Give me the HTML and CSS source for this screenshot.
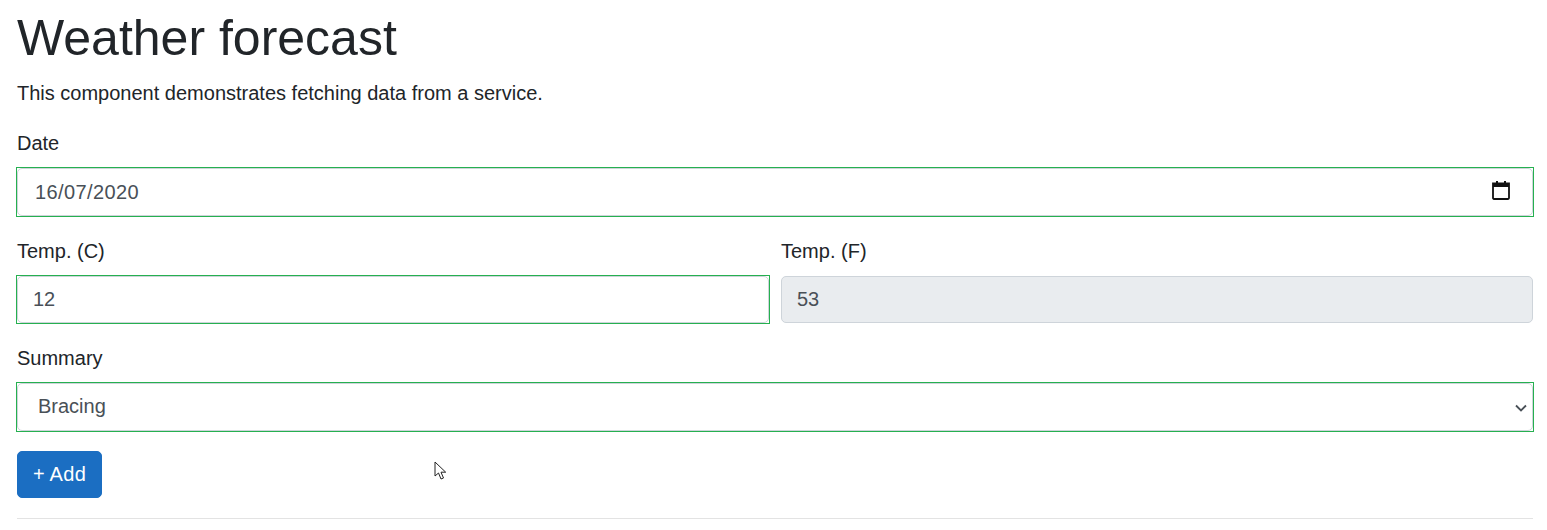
FILE: index.html
```html
<!DOCTYPE html>
<html lang="en">
<head>
<meta charset="utf-8">
<title>Weather forecast</title>
<link rel="stylesheet" href="styles.css">
</head>
<body>
<main class="page">
  <h1 class="title">Weather forecast</h1>
  <p class="lead">This component demonstrates fetching data from a service.</p>
  <form class="form">
    <div class="group">
      <label class="label" for="date">Date</label>
      <div class="field valid">
        <input class="control tall date" id="date" type="text" value="16/07/2020">
        <svg class="cal" viewBox="0 0 20 20" width="20" height="20" aria-hidden="true"><path d="M2 3.500h16v14.600a.9.9 0 0 1-.9.9H2.900a.9.9 0 0 1-.9-.9z" fill="none" stroke="#111" stroke-width="1.800"/><rect x="2" y="3" width="16" height="4" fill="#111"/><rect x="5" y="1" width="2" height="3" fill="#111"/><rect x="13" y="1" width="2" height="3" fill="#111"/></svg>
      </div>
    </div>
    <div class="row">
      <div class="col">
        <label class="label" for="c">Temp. (C)</label>
        <div class="field valid"><input class="control" id="c" type="text" value="12"></div>
      </div>
      <div class="col">
        <label class="label" for="f">Temp. (F)</label>
        <div class="field"><input class="control" id="f" type="text" value="53" disabled></div>
      </div>
    </div>
    <div class="group">
      <label class="label" for="s">Summary</label>
      <div class="field valid">
        <select class="control tall select" id="s"><option>Bracing</option></select>
        <svg class="chev" viewBox="0 0 12 8" width="12" height="8" aria-hidden="true"><path d="M1 1.500l5 5 5-5" fill="none" stroke="#495057" stroke-width="1.800"/></svg>
      </div>
    </div>
    <button class="btn" type="button">+ Add</button>
  </form>
  <hr class="rule">
</main>
<svg class="pointer" viewBox="0 0 13 20" width="13" height="20" aria-hidden="true"><path d="M1 1v14l3.500-3 2.500 6 2.500-1-2.500-5.800h4.700z" fill="#fff" stroke="#222" stroke-width="1"/></svg>
</body>
</html>
```
FILE: styles.css
```css
html, body { margin: 0; padding: 0; background: #fff; }
body {
  font-family: "Liberation Sans", Arial, sans-serif;
  font-size: 20px;
  line-height: 1.5;
  color: #212529;
  position: relative;
  height: 530px;
  overflow: hidden;
}
.page { padding: 0 14px 0 17px; }
.title { margin: 0 0 10px; font-size: 50px; font-weight: 400; line-height: 1.2; padding-top: 8px; }
.lead { margin: 0 0 20px; }
.form { display: block; }
.group { margin-bottom: 19px; }
.label { display: block; margin-bottom: 9px; }
.field { position: relative; margin: 0 -1px; border: 1px solid transparent; }
.valid { border-color: #26b050; }
.control {
  display: block; box-sizing: border-box; width: 100%; height: 47px;
  padding: 7px 15px; font: inherit; color: #495057; background: #fff;
  border: 1px solid #ced4da; border-radius: 5px; margin: 0;
}
.tall { height: 48px; }
.date { padding-left: 17px; letter-spacing: .4px; }
.control:disabled { background: #e9ecef; opacity: 1; }
.cal { position: absolute; right: 22px; top: 12px; }
.row { display: flex; gap: 12px; margin-bottom: 19px; }
.col { flex: 1 1 0; min-width: 0; }
.select { padding: 6px 15px 8px 20px; appearance: none; }
.chev { position: absolute; right: 6px; top: 21px; pointer-events: none; }
.btn {
  display: block; height: 47px; width: 85px; padding: 0 0 2px; font: inherit; color: #fff;
  letter-spacing: .3px;
  background: #1b6ec2; border: 1px solid #1b6ec2; border-radius: 5px;
}
.rule { margin: 20px 0 0; border: 0; border-top: 1px solid #e3e3e3; }
.pointer { position: absolute; left: 434px; top: 461px; }
```
